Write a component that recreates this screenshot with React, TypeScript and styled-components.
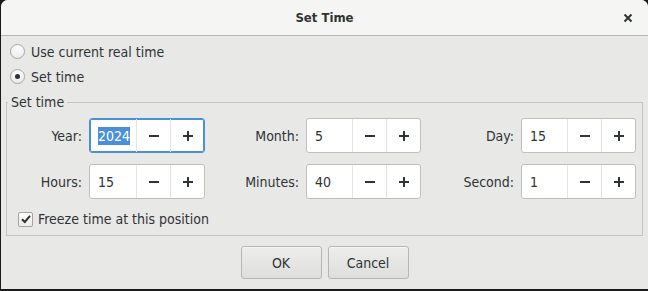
import React, { useState } from "react";
import styled, { createGlobalStyle } from "styled-components";

const Global = createGlobalStyle`
  html, body { margin: 0; padding: 0; background: #1b1b1b; }
  body {
    font-family: "DejaVu Sans Condensed", "DejaVu Sans", sans-serif;
    font-size: 14px;
    color: #2e3436;
  }
`;

// Styled Components
const Window = styled.div`
  width: 647px;
  height: 289px;
  margin-left: 1px;
  background: #e8e8e7;
  border-radius: 7px 7px 0 0;
  display: flex;
  flex-direction: column;
  overflow: hidden;
`;

const TitleBar = styled.div`
  height: 35px;
  flex: none;
  background: #f5f5f4;
  border-bottom: 1px solid #b6b6b3;
  display: flex;
  align-items: center;
  justify-content: center;
  position: relative;
`;

const Title = styled.div`
  font-weight: bold;
  font-size: 13px;
  color: #2e3436;
`;

const CloseButton = styled.button`
  position: absolute;
  right: 12px;
  top: 10px;
  width: 16px;
  height: 16px;
  padding: 0;
  border: none;
  background: transparent;
  display: flex;
  align-items: center;
  justify-content: center;
`;

const Body = styled.div`
  flex: 1;
  display: flex;
  flex-direction: column;
  padding: 3px 5px 0 5px;
`;

const OptionRow = styled.label`
  display: flex;
  align-items: center;
  gap: 6px;
  height: 25px;
  padding-left: 4px;
  cursor: default;
`;

const RadioCircle = styled.span<{ $checked: boolean }>`
  width: 15px;
  height: 15px;
  border-radius: 50%;
  border: 1px solid #a4a4a1;
  background: linear-gradient(#fdfdfd, #ececeb);
  box-sizing: border-box;
  display: flex;
  align-items: center;
  justify-content: center;

  &::after {
    content: "";
    width: 5px;
    height: 5px;
    border-radius: 50%;
    background: #2e3436;
    display: ${(p) => (p.$checked ? "block" : "none")};
  }
`;

const Frame = styled.fieldset`
  margin: 6px 0 0 0;
  padding: 9px 0 0 0;
  border: 1px solid #c4c4c1;
  min-width: 0;
  height: 141px;
  box-sizing: border-box;
`;

const Legend = styled.legend`
  padding: 0 3px 0 3px;
  margin-left: 1px;
  line-height: 14px;
`;

const Grid = styled.div`
  display: grid;
  grid-template-columns: 75px 116px 87px 115px 86px 115px;
  column-gap: 7px;
  row-gap: 11px;
  align-items: center;
`;

const FieldLabel = styled.span`
  text-align: right;
`;

const Spin = styled.div<{ $focused?: boolean }>`
  display: flex;
  height: 35px;
  box-sizing: border-box;
  border: 1px solid ${(p) => (p.$focused ? "#4a90d9" : "#bfbfbc")};
  box-shadow: ${(p) => (p.$focused ? "inset 0 0 0 1px #4a90d9" : "none")};
  border-radius: 3px;
  background: #ffffff;
  overflow: hidden;
`;

const SpinValue = styled.div`
  flex: 1;
  display: flex;
  align-items: center;
  padding-left: 8px;
`;

const Selected = styled.span`
  background: #4a90d9;
  color: #ffffff;
  padding: 1px 0;
`;

const SpinButton = styled.div`
  width: 33px;
  border-left: 1px solid #e3e3e1;
  display: flex;
  align-items: center;
  justify-content: center;
`;

const CheckRow = styled.label`
  display: flex;
  align-items: center;
  gap: 5px;
  margin-top: 12px;
  padding-left: 11px;
`;

const CheckBox = styled.span`
  width: 15px;
  height: 15px;
  box-sizing: border-box;
  border: 1px solid #a4a4a1;
  border-radius: 2px;
  background: linear-gradient(#fdfdfd, #ececeb);
  display: flex;
  align-items: center;
  justify-content: center;
`;

const Footer = styled.div`
  display: flex;
  justify-content: center;
  gap: 6px;
  padding-top: 10px;
`;

const Button = styled.button`
  width: 81px;
  height: 33px;
  font-family: inherit;
  font-size: 14px;
  color: #2e3436;
  border: 1px solid #b6b6b3;
  border-radius: 3px;
  background: linear-gradient(#ededec, #dededc);
  box-shadow: inset 0 1px #f7f7f7;
`;

type Field = { label: string; value: string; focused?: boolean };

const fields: Field[] = [
  { label: "Year:", value: "2024", focused: true },
  { label: "Month:", value: "5" },
  { label: "Day:", value: "15" },
  { label: "Hours:", value: "15" },
  { label: "Minutes:", value: "40" },
  { label: "Second:", value: "1" },
];

const Minus = () => (
  <svg width="12" height="12" viewBox="0 0 12 12">
    <rect x="1" y="5" width="10" height="2" fill="#2e3436" />
  </svg>
);

const Plus = () => (
  <svg width="12" height="12" viewBox="0 0 12 12">
    <rect x="1" y="5" width="10" height="2" fill="#2e3436" />
    <rect x="5" y="1" width="2" height="10" fill="#2e3436" />
  </svg>
);

const App = () => {
  const [useReal, setUseReal] = useState(false);

  return (
    <>
      <Global />
      <Window>
        <TitleBar>
          <Title>Set Time</Title>
          <CloseButton>
            <svg width="10" height="10" viewBox="0 0 10 10">
              <path d="M1.5 1.5 L8.5 8.5 M8.5 1.5 L1.5 8.5" stroke="#2e3436" strokeWidth="2" />
            </svg>
          </CloseButton>
        </TitleBar>
        <Body>
          <OptionRow onClick={() => setUseReal(true)}>
            <RadioCircle $checked={useReal} />
            Use current real time
          </OptionRow>
          <OptionRow onClick={() => setUseReal(false)}>
            <RadioCircle $checked={!useReal} />
            Set time
          </OptionRow>
          <Frame>
            <Legend>Set time</Legend>
            <Grid>
              {fields.map((f) => (
                <React.Fragment key={f.label}>
                  <FieldLabel>{f.label}</FieldLabel>
                  <Spin $focused={f.focused}>
                    <SpinValue>{f.focused ? <Selected>{f.value}</Selected> : f.value}</SpinValue>
                    <SpinButton>
                      <Minus />
                    </SpinButton>
                    <SpinButton>
                      <Plus />
                    </SpinButton>
                  </Spin>
                </React.Fragment>
              ))}
            </Grid>
            <CheckRow>
              <CheckBox>
                <svg width="12" height="12" viewBox="0 0 12 12">
                  <path d="M2 6.2 L4.8 9 L10 2.8" stroke="#2e3436" strokeWidth="2" fill="none" />
                </svg>
              </CheckBox>
              Freeze time at this position
            </CheckRow>
          </Frame>
          <Footer>
            <Button>OK</Button>
            <Button>Cancel</Button>
          </Footer>
        </Body>
      </Window>
    </>
  );
};

export default App;
